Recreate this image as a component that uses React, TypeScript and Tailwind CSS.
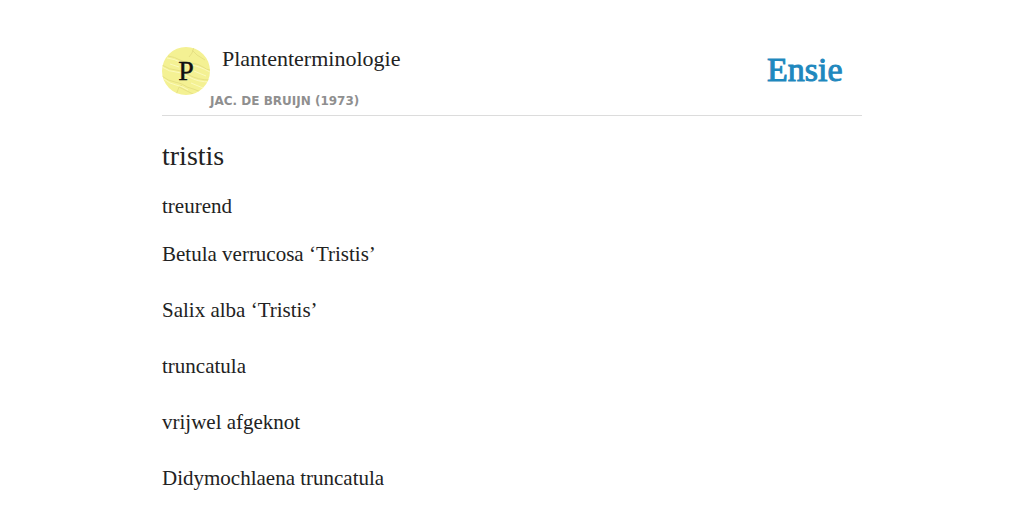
const paragraphs = [
	"Betula verrucosa ‘Tristis’",
	"Salix alba ‘Tristis’",
	"truncatula",
	"vrijwel afgeknot",
	"Didymochlaena truncatula",
];

function Avatar() {
	return (
		<svg viewBox="0 0 48 48" className="w-12 h-12 shrink-0 rounded-full" aria-hidden="true">
			<rect width="48" height="48" fill="#f4f193" />
			{/* leaf veins */}
			<g fill="none" stroke="#e6e083" strokeWidth="1">
				<path d="M6 9q7 1 12 4t11 3q8 1 12 4t7 3" />
				<path d="M0 18q8 5 14 5t13 5q9 5 21 5" />
				<path d="M0 29q6 5 13 6t12 5q7 2 14 5" />
				<path d="M27 10l3-4 2-6M30 3l5 5 8 5M14 48l3-8 3-2M17 40l8 4 8 4" />
			</g>
			<g fill="none" stroke="#fbf9bd" strokeWidth="1">
				<path d="M5 11q8 1 13 4t11 3q8 1 19 7" />
				<path d="M0 20q8 5 14 5t13 5q9 5 21 5" />
				<path d="M2 32q6 5 12 6t12 5M8 17l9 3M32 24l12 5M29 36l12 5" />
			</g>
			<text x="24" y="33" textAnchor="middle" className="font-['Liberation_Serif',serif] text-[28px]" fill="#111" stroke="#111" strokeWidth="0.4">
				P
			</text>
		</svg>
	);
}

function Logo() {
	return (
		<svg viewBox="0 0 80 40" className="w-20 h-10">
			<text x="1" y="30" className="font-['Liberation_Serif',serif] text-[34px]" fill="#1f88be" stroke="#1f88be" strokeWidth="1">
				Ensie
			</text>
		</svg>
	);
}

function Header() {
	return (
		<header className="flex justify-between border-b border-[#dcdcdc] pb-1">
			<div className="flex">
				<Avatar />
				<div>
					<a href="#plantenterminologie" className="block pl-3 pb-5 text-[22px] leading-6">
						Plantenterminologie
					</a>
					<p className="font-['DejaVu_Sans',sans-serif] text-xs leading-5 font-bold uppercase text-[#8f8f8f]">
						Jac. de Bruijn (1973)
					</p>
				</div>
			</div>
			<a href="#ensie" className="mr-4 pt-1">
				<Logo />
			</a>
		</header>
	);
}

function App() {
	return (
		<div className="h-screen overflow-hidden bg-white font-['Liberation_Serif',serif] text-[#222]">
			<main className="mx-auto max-w-[700px] pt-[47px]">
				<Header />
				<h1 className="mt-6 text-[28px] leading-8">tristis</h1>
				<p className="mt-5 mb-5 text-[21px] leading-7">treurend</p>
				<div className="space-y-7 text-[21px] leading-7">
					{paragraphs.map((text) => (
						<p key={text}>{text}</p>
					))}
				</div>
			</main>
		</div>
	);
}

export default App;
